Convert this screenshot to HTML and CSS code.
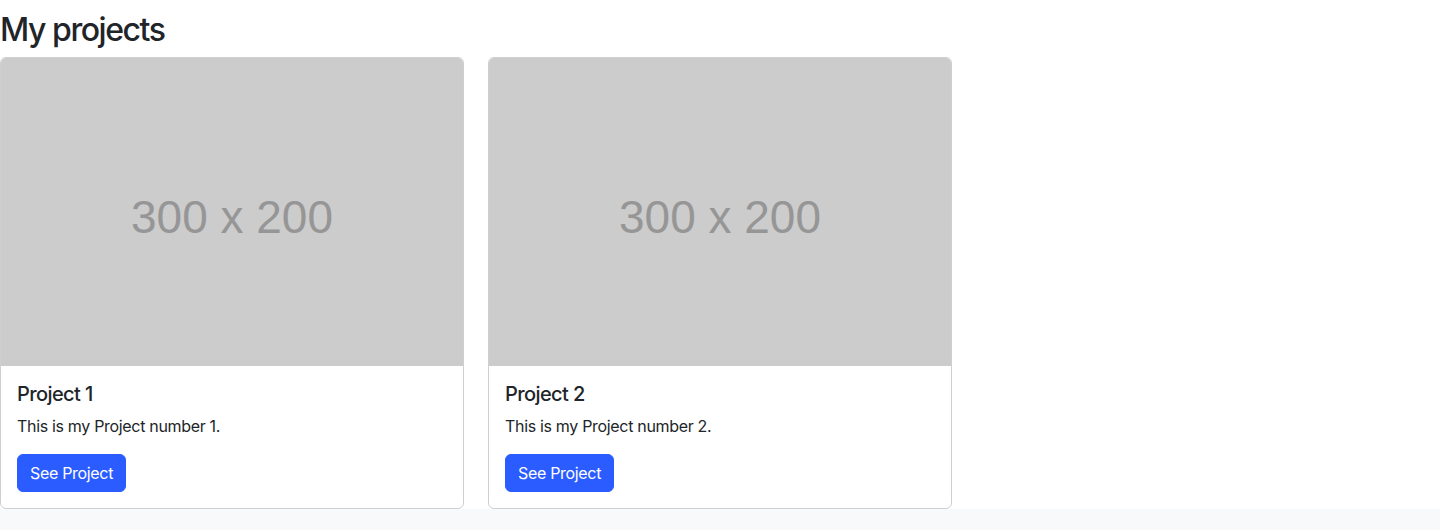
FILE: index.html
```html
<!DOCTYPE html>
<html lang="en">
<head>
<meta charset="utf-8">
<title>My projects</title>
<link rel="stylesheet" href="styles.css">
</head>
<body>
<section class="projects">
  <h2 class="title">My projects</h2>
  <div class="grid">
    <div class="card">
      <div class="card-img"><span>300 x 200</span></div>
      <div class="card-body">
        <h5 class="card-title">Project 1</h5>
        <p class="card-text">This is my Project number 1.</p>
        <a class="btn" href="#">See Project</a>
      </div>
    </div>
    <div class="card">
      <div class="card-img"><span>300 x 200</span></div>
      <div class="card-body">
        <h5 class="card-title">Project 2</h5>
        <p class="card-text">This is my Project number 2.</p>
        <a class="btn" href="#">See Project</a>
      </div>
    </div>
  </div>
</section>
</body>
</html>
```
FILE: styles.css
```css
* { box-sizing: border-box; }
html, body { margin: 0; padding: 0; }
body {
  background: #f8f9fa;
  font-family: Inter, "Noto Sans", sans-serif;
  color: #212529;
  font-size: 16px;
  line-height: 1.5;
  letter-spacing: -0.02em;
}
.projects {
  background: #fff;
  padding-top: 11px;
}
.title {
  margin: 0 0 8px 0;
  font-size: 32px;
  font-weight: 500;
  line-height: 1.2;
  letter-spacing: -0.045em;
}
.grid {
  display: flex;
  gap: 24px;
}
.card {
  width: 464px;
  border: 1px solid #cfcfcf;
  border-radius: 6px;
  overflow: hidden;
  background: #fff;
}
.card-img {
  height: 308px;
  background: #cccccc;
  display: flex;
  align-items: center;
  justify-content: center;
}
.card-img span {
  font-family: "Liberation Sans", Arial, sans-serif;
  font-size: 46px;
  color: #969696;
  line-height: 1;
  letter-spacing: 0;
  margin-top: 10px;
}
.card-body {
  padding: 16px;
}
.card-title {
  margin: 0 0 8px 0;
  font-size: 20px;
  font-weight: 500;
  line-height: 1.2;
  letter-spacing: -0.03em;
}
.card-text {
  margin: 0 0 16px 0;
}
.btn {
  display: inline-block;
  background: #2a5cff;
  color: #fff;
  text-decoration: none;
  padding: 6px 12px;
  border-radius: 6px;
  line-height: 24px;
  border: 1px solid #2a5cff;
}
```
